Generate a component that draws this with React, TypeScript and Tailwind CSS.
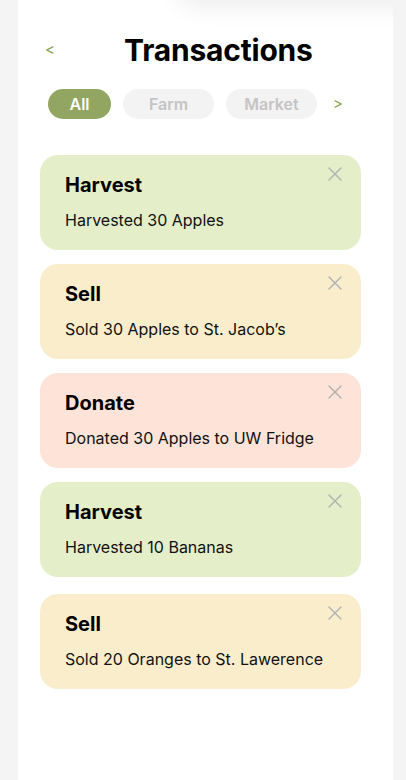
import { X } from 'lucide-react';

type Tx = {
  id: number;
  kind: 'Harvest' | 'Sell' | 'Donate';
  text: string;
};

const TRANSACTIONS: Tx[] = [
  { id: 1, kind: 'Harvest', text: 'Harvested 30 Apples' },
  { id: 2, kind: 'Sell', text: 'Sold 30 Apples to St. Jacob’s' },
  { id: 3, kind: 'Donate', text: 'Donated 30 Apples to UW Fridge' },
  { id: 4, kind: 'Harvest', text: 'Harvested 10 Bananas' },
  { id: 5, kind: 'Sell', text: 'Sold 20 Oranges to St. Lawerence' },
];

// 種類ごとのカード背景色
const KIND_BG: Record<Tx['kind'], string> = {
  Harvest: 'bg-[#e4eec9]',
  Sell: 'bg-[#faedcc]',
  Donate: 'bg-[#fde3d8]',
};

const TxCard = ({ tx, last }: { tx: Tx; last: boolean }) => (
  <div
    className={`relative h-[95px] w-[321px] rounded-[18px] px-[25px] pt-[16px] ${KIND_BG[tx.kind]} ${
      last ? 'mt-[3px]' : ''
    }`}
  >
    <h3 className="text-[20px] leading-[28px] font-bold text-black">{tx.kind}</h3>
    <p className="mt-[10px] text-[16px] leading-[22px] text-[#111]">{tx.text}</p>
    <button className="absolute right-[14px] top-[7px] text-[#b4b4b4]" title="Remove">
      <X size={24} strokeWidth={1.5} />
    </button>
  </div>
);

export default function App() {
  const filters = ['All', 'Farm', 'Market'];
  const active = 'All';

  return (
    <div className="min-h-[780px] bg-[#f4f4f4] font-['Inter','Noto_Sans',sans-serif]">
      <div className="relative mx-[18px] w-[375px] min-h-[780px] overflow-hidden bg-white">
        {/* 上部の影（上にあるシートの影） */}
        <div className="absolute -top-[40px] left-[160px] h-[40px] w-[260px] rounded-[24px] bg-white shadow-[0_6px_24px_rgba(0,0,0,0.08)]" />

        {/* ヘッダー */}
        <div className="flex items-center px-[27px] pt-[30px]">
          <button className="w-[20px] text-left text-[15px] text-[#8a9f57]">&lt;</button>
          <h1 className="ml-[59px] text-[30px] leading-[40px] font-bold tracking-[-0.2px] text-black">
            Transactions
          </h1>
        </div>

        {/* フィルター */}
        <div className="mt-[19px] flex items-center gap-[12px] px-[30px]">
          {filters.map((f) => (
            <button
              key={f}
              className={`h-[30px] rounded-full text-[16px] font-semibold ${
                f === active
                  ? 'w-[63px] bg-[#93a661] text-white'
                  : 'w-[91px] bg-[#f3f3f3] text-[#c4c4c4]'
              }`}
            >
              {f}
            </button>
          ))}
          <button className="ml-[4px] text-[15px] text-[#8a9f57]">&gt;</button>
        </div>

        {/* 取引リスト */}
        <div className="mt-[36px] flex flex-col gap-[14px] px-[22px]">
          {TRANSACTIONS.map((tx, i) => (
            <TxCard key={tx.id} tx={tx} last={i === TRANSACTIONS.length - 1} />
          ))}
        </div>
      </div>
    </div>
  );
}
